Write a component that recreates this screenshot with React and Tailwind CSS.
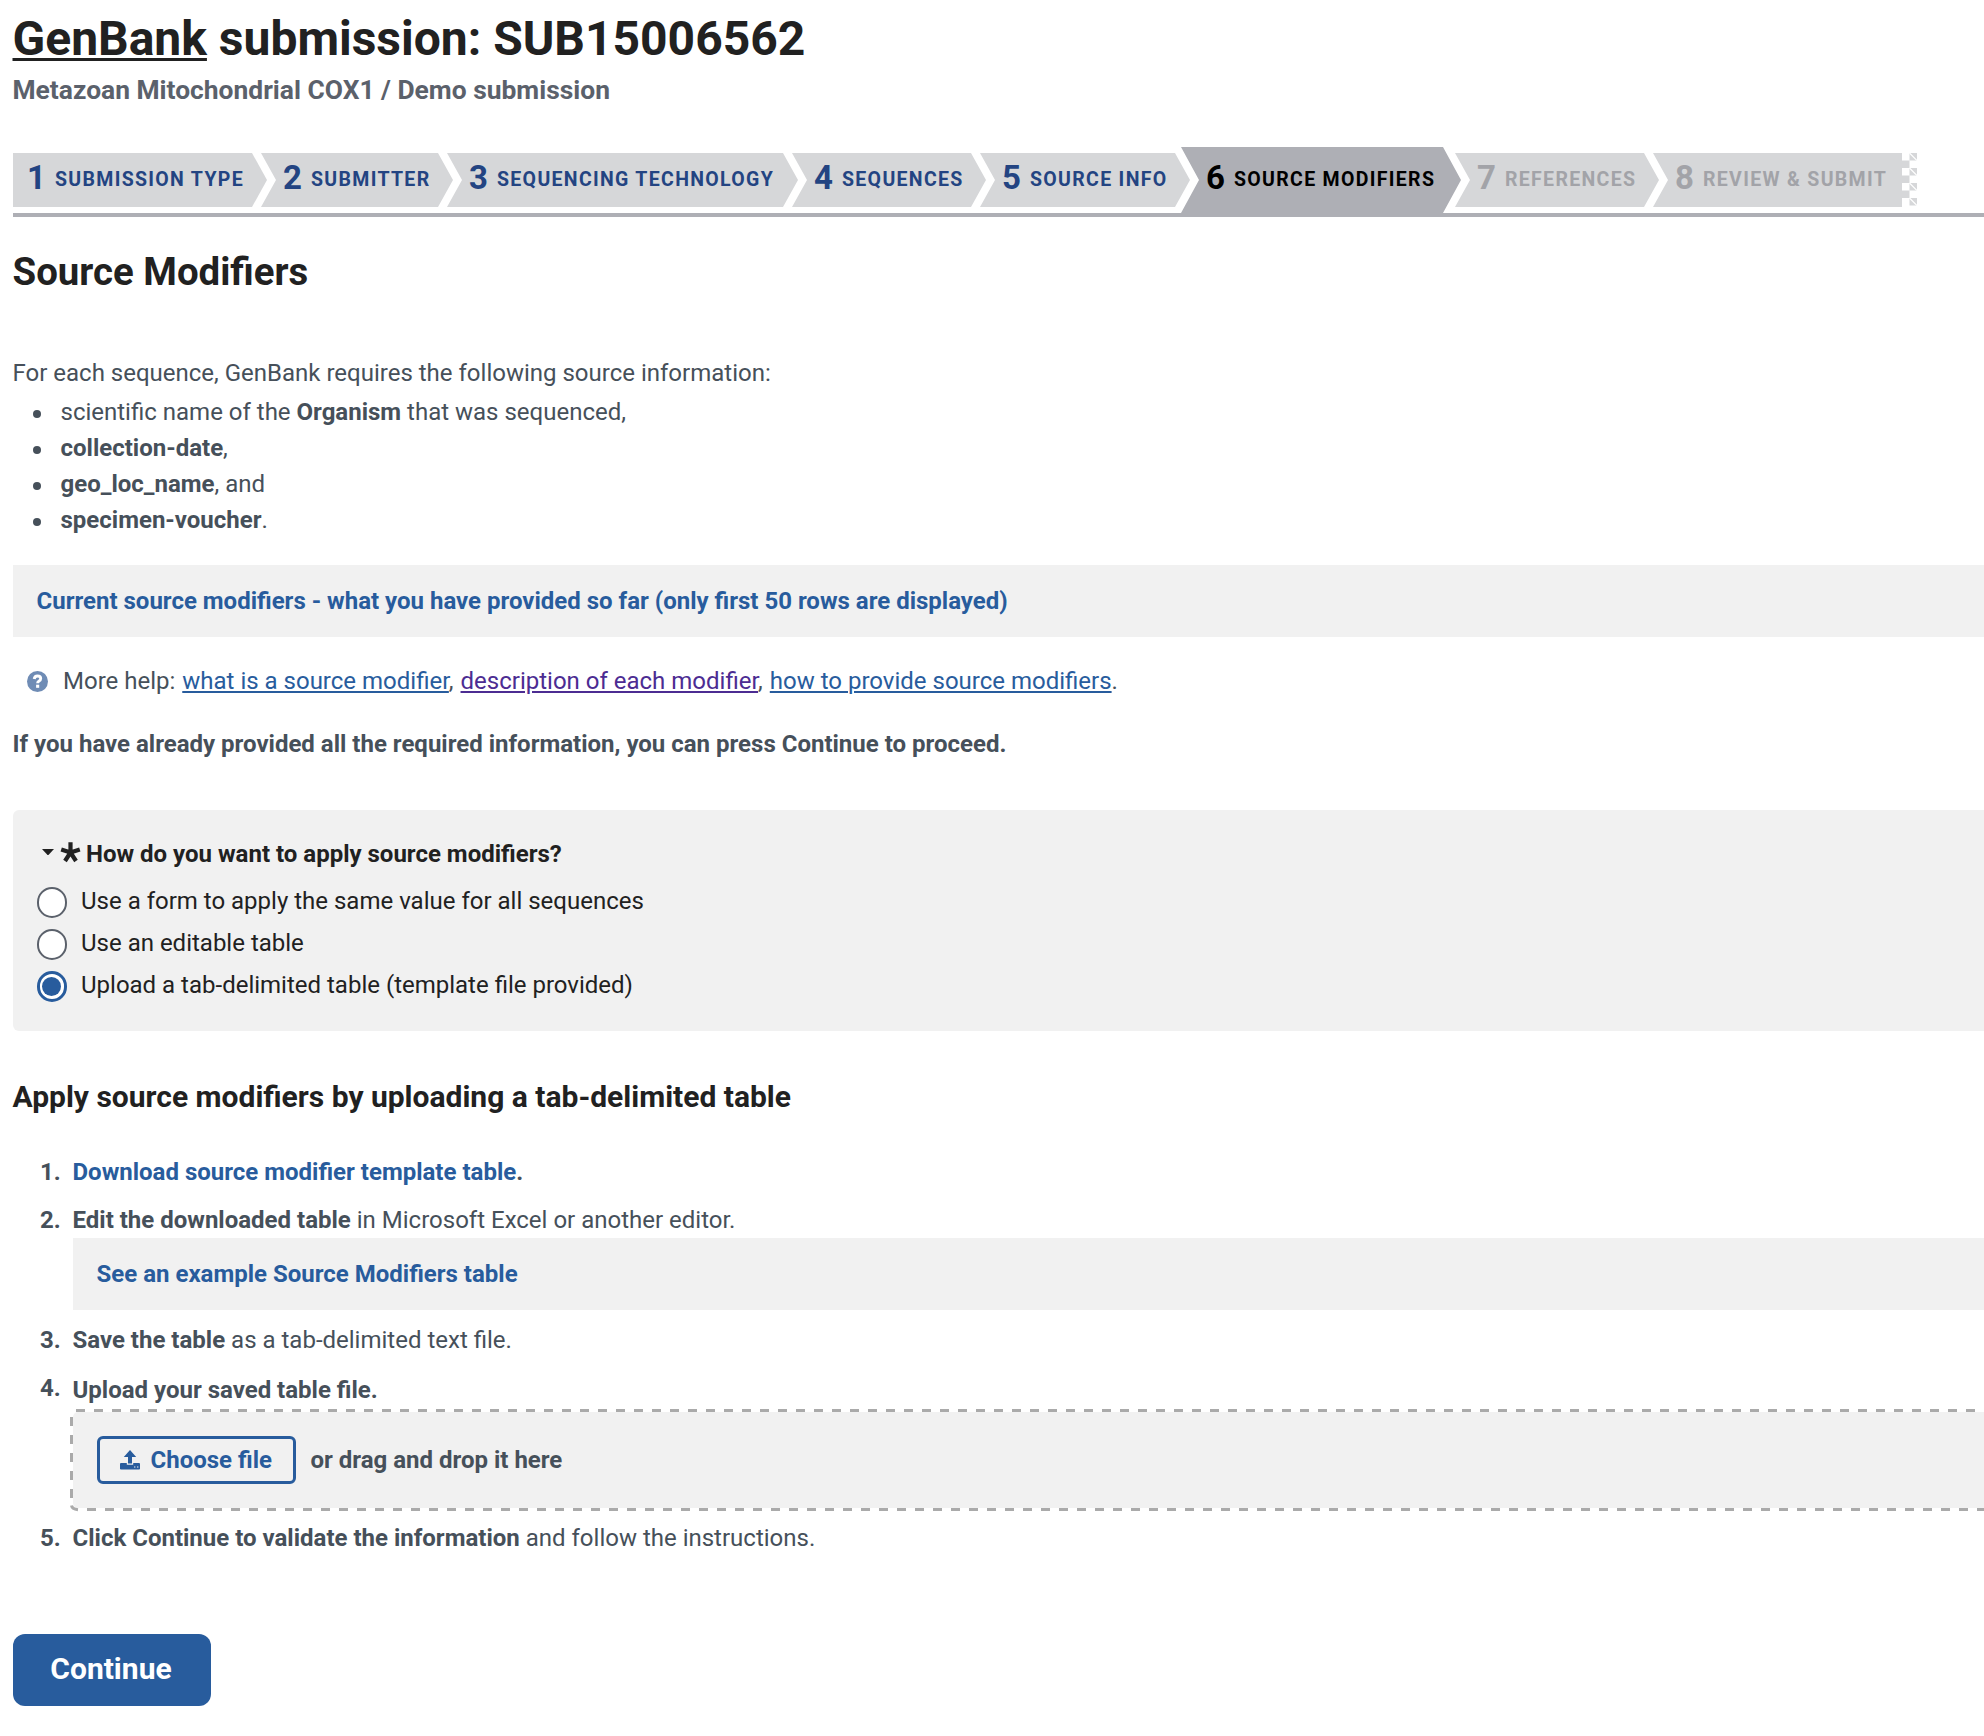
import React from "react";

const steps = [
  { n: 1, label: "SUBMISSION TYPE", w: "w-[254px]", pad: "pl-[14px]", kind: "first" },
  { n: 2, label: "SUBMITTER", w: "w-[192px] -ml-[6px]", pad: "pl-[22px]", kind: "done" },
  { n: 3, label: "SEQUENCING TECHNOLOGY", w: "w-[351px] -ml-[6px]", pad: "pl-[22px]", kind: "done" },
  { n: 4, label: "SEQUENCES", w: "w-[194px] -ml-[6px]", pad: "pl-[22px]", kind: "done" },
  { n: 5, label: "SOURCE INFO", w: "w-[210px] -ml-[6px]", pad: "pl-[22px]", kind: "done" },
  { n: 6, label: "SOURCE MODIFIERS", w: "w-[280px] -ml-[9px]", pad: "pl-[25px]", kind: "current" },
  { n: 7, label: "REFERENCES", w: "w-[204px] -ml-[6px]", pad: "pl-[22px]", kind: "todo" },
  { n: 8, label: "REVIEW & SUBMIT", w: "w-[249px] -ml-[6px]", pad: "pl-[22px]", kind: "last" },
];

const kinds = {
  first: "h-[54px] bg-[#d6d7d9] text-[#234482] [clip-path:polygon(0_0,calc(100%-15px)_0,100%_50%,calc(100%-15px)_100%,0_100%)]",
  done: "h-[54px] bg-[#d6d7d9] text-[#234482] [clip-path:polygon(0_0,calc(100%-15px)_0,100%_50%,calc(100%-15px)_100%,0_100%,15px_50%)]",
  current: "h-[66px] bg-[#aeafb5] text-black [clip-path:polygon(0_0,calc(100%-18px)_0,100%_50%,calc(100%-18px)_100%,0_100%,18px_50%)]",
  todo: "h-[54px] bg-[#d6d7d9] text-[#a2a3a8] [clip-path:polygon(0_0,calc(100%-15px)_0,100%_50%,calc(100%-15px)_100%,0_100%,15px_50%)]",
  last: "h-[54px] bg-[#d6d7d9] text-[#a2a3a8] [clip-path:polygon(0_0,100%_0,100%_100%,0_100%,15px_50%)]",
};

function Step({ step }) {
  return (
    <li className={`flex shrink-0 items-center whitespace-nowrap font-bold ${step.w} ${step.pad} ${kinds[step.kind]}`}>
      <span className="mb-[6px] w-[28px] text-[33px] leading-none">{step.n}</span>
      <span className="mb-[1px] text-[19.5px] leading-none tracking-[1.32px]">{step.label}</span>
    </li>
  );
}

function Checker() {
  return (
    <svg className="h-[54px] w-[15px]" viewBox="0 0 15 54" fill="#d6d7d9">
      <path d="M7.5 0h7.5v7.500h-7.5zM0 7.500h7.500v7.500h-7.500zM7.500 15h7.500v7.500h-7.500zM0 22.500h7.500v7.500h-7.500zM7.500 30h7.500v7.500h-7.500zM0 37.500h7.500v7.500h-7.500zM7.500 45h7.500v7.500h-7.500z" />
      <path d="M7.500 0l7.500 7.500M7.500 15l7.500 7.500M7.500 30l7.500 7.500M7.500 45l7.500 7.500" stroke="#fff" strokeWidth="1.200" />
    </svg>
  );
}

function Radio({ label, checked }) {
  return (
    <label className="flex h-[42px] items-center text-[24px] leading-[36px] text-[#212121]">
      <span className={`mr-[14.500px] flex h-[31px] w-[30px] items-center justify-center rounded-full bg-white ${checked ? "border-[3.500px] border-[#285c9d]" : "border-2 border-[#5b616b]"}`}>
        {checked && <span className="size-[19px] shrink-0 rounded-full bg-[#285c9d]" />}
      </span>
      <span className="-mt-[3px]">{label}</span>
    </label>
  );
}

function Bullet({ children }) {
  return (
    <li className="flex items-center">
      <span className="ml-[20px] mr-[20px] mt-[3px] size-[8px] rounded-full bg-[#46505a]" />
      <span>{children}</span>
    </li>
  );
}

function Numbered({ n, className, children }) {
  return (
    <li className={`flex ${className}`}>
      <span className="w-[60px] shrink-0 pl-[27.5px] font-bold">{n}.</span>
      <div className="grow">{children}</div>
    </li>
  );
}

function DashedEdge() {
  return (
    <svg className="absolute left-0 top-0 h-full w-full overflow-visible" fill="none" stroke="#aaaaaa" strokeWidth="3">
      <path d="M3 -1.500H1920M14 97.500H1920M-1.500 5V95" strokeDasharray="9 9" />
      <path d="M-1.500 93.500Q-1 97 5 97.700" />
    </svg>
  );
}

export default function App() {
  return (
    <main className="h-[1736px] w-[1984px] overflow-hidden bg-white pl-[12.5px] font-['Roboto',sans-serif] text-[24px] leading-[36px] text-[#46505a]">
      <h1 className="h-[72px] pt-[7px] text-[48px] font-bold leading-[64px] text-[#212121]">
        <a className="underline decoration-[3px] underline-offset-[3px]">GenBank</a> submission: SUB15006562
      </h1>
      <p className="h-[75px] text-[26.4px] font-bold text-[#5b616b]">Metazoan Mitochondrial COX1 / Demo submission</p>
      <ol className="ml-[0.5px] flex h-[70px] items-center border-b-4 border-[#aeafb5]">
        {steps.map((s) => <Step key={s.n} step={s} />)}
        <li><Checker /></li>
      </ol>
      <h2 className="mt-[30px] h-[50px] text-[38.4px] font-bold leading-[50px] text-[#212121]">Source Modifiers</h2>
      <p className="mt-[58px]">For each sequence, GenBank requires the following source information:</p>
      <ul className="mt-[3px]">
        <Bullet>scientific name of the <b>Organism</b> that was sequenced,</Bullet>
        <Bullet><b>collection-date</b>,</Bullet>
        <Bullet><b>geo_loc_name</b>, and</Bullet>
        <Bullet><b>specimen-voucher</b>.</Bullet>
      </ul>
      <div className="mt-[27px] flex h-[72px] items-center bg-[#f1f1f1] pl-[24px] font-bold text-[#285c9d]">
        Current source modifiers - what you have provided so far (only first 50 rows are displayed)
      </div>
      <p className="mt-[26px] flex h-[36px] items-center pl-[14.5px] text-[#46505a]">
        <svg className="mr-[15px] size-[21px]" viewBox="0 0 21 21">
          <circle cx="10.500" cy="10.500" r="10.500" fill="#6f8cb5" />
          <path d="M7.200 8q.4-3 3.300-3 3.200 0 3.200 2.600 0 1.500-1.600 2.400-1.500.8-1.500 2.200" fill="none" stroke="#fff" strokeWidth="2.900" />
          <rect x="9.100" y="13.700" width="3.100" height="3.100" fill="#fff" />
        </svg>
        <span>
          More help: <a className="ml-[1px] text-[#285c9d] underline decoration-[2px] underline-offset-[2px]">what is a source modifier</a>,{" "}
          <a className="ml-[1px] text-[#4c2c92] underline decoration-[2px] underline-offset-[2px]">description of each modifier</a>,{" "}
          <a className="ml-[1px] text-[#285c9d] underline decoration-[2px] underline-offset-[2px]">how to provide source modifiers</a>.
        </span>
      </p>
      <p className="mt-[27px] font-bold">If you have already provided all the required information, you can press Continue to proceed.</p>
      <fieldset className="mt-[48px] h-[221px] rounded-l-[6px] bg-[#f1f1f1] pl-[24px] pt-[26px]">
        <div className="flex h-[36px] items-center font-bold text-[#212121]">
          <svg className="mb-[4px] ml-[5.500px] mr-[6px] h-[6.500px] w-[12px]" viewBox="0 0 12 6.500"><path d="M0 0h12L6 6.500z" fill="#212121" /></svg>
          <svg className="mb-[3px] mr-[6.500px] ml-[0.5px] size-[19px] overflow-visible" viewBox="0 0 19 19" stroke="#212121" strokeWidth="4.200">
            <path d="M9.500 -.7v10.700M.2 6.400l9.300 3.100M18.800 6.400l-9.300 3.100M4 18l5.500-8.500M15 18l-5.500-8.500" />
          </svg>
          How do you want to apply source modifiers?
        </div>
        <div className="mt-[9px]">
          <Radio label="Use a form to apply the same value for all sequences" />
          <Radio label="Use an editable table" />
          <Radio label="Upload a tab-delimited table (template file provided)" checked />
        </div>
      </fieldset>
      <h3 className="mt-[46px] text-[30px] font-bold leading-[40px] text-[#212121]">Apply source modifiers by uploading a tab-delimited table</h3>
      <ol className="mt-[37px]">
        <Numbered n={1} className="h-[48px] font-bold"><a className="text-[#285c9d]">Download source modifier template table</a>.</Numbered>
        <Numbered n={2} className="mb-[12px]">
          <b>Edit the downloaded table</b> in Microsoft Excel or another editor.
          <div className="flex h-[72px] items-center bg-[#f1f1f1] pl-[24px] font-bold text-[#285c9d]">See an example Source Modifiers table</div>
        </Numbered>
        <Numbered n={3} className="h-[48px]"><b>Save the table</b> as a tab-delimited text file.</Numbered>
        <Numbered n={4} className="font-bold">
          <div className="pt-[2px]">Upload your saved table file.</div>
          <div className="relative mb-[3px] ml-[0.5px] mt-[4px] flex h-[96px] items-center rounded-l-[5px] bg-[#f1f1f1] pl-[24px]">
            <DashedEdge />
            <button className="mr-[14.500px] flex h-[48px] w-[199px] items-center rounded-[6px] border-[3px] border-[#285c9d] pl-[20px] font-bold text-[#285c9d]">
              <svg className="mr-[10.500px] size-[20px]" viewBox="0 0 20 20" fill="#285c9d">
                <path d="M10 0l6.200 7H12v6.500H8V7H3.800z" />
                <path d="M1 13h5.800v1.800h6.400V13H19q1 0 1 1v4.800q0 .8-1 .8H1q-1 0-1-.8V14q0-1 1-1z" />
                <path d="M14 17h1.400M17 17h1.400" stroke="#f1f1f1" strokeWidth="1" />
              </svg>
              Choose file
            </button>
            or drag and drop it here
          </div>
        </Numbered>
        <Numbered n={5} className="mt-[9px]"><b>Click Continue to validate the information</b> and follow the instructions.</Numbered>
      </ol>
      <button className="mt-[78px] flex h-[72px] w-[198px] items-center justify-center rounded-[12px] bg-[#285c9d] pb-[2px] pr-[1px] text-[30px] font-bold text-white">Continue</button>
    </main>
  );
}
